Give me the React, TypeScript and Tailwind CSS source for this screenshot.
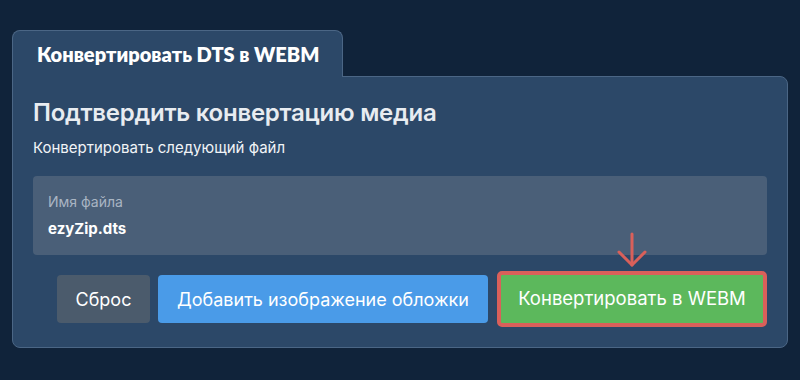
export default function App() {
    return (
        <div className="min-h-[380px] w-[800px] bg-[#10233a] px-3 pt-[30px] font-['Inter',sans-serif]">
            {/* Tab */}
            <div className="relative z-10 -mb-px flex h-[47px] w-[331px] items-center rounded-t-[8px] border border-b-0 border-[#4b6685] bg-[#2c4868] pl-6">
                <span className="font-['Lato',sans-serif] text-[20px] font-extrabold text-white">
                    Конвертировать DTS в WEBM
                </span>
            </div>

            {/* Card */}
            <div className="w-[776px] rounded-b-[8px] rounded-tr-[8px] border border-[#4b6685] bg-[#2c4868] px-5 pb-5 pt-[20px]">
                <h1 className="text-[24px] leading-8 font-semibold tracking-[-0.25px] text-[#e8ecf1]">Подтвердить конвертацию медиа</h1>
                <p className="mt-[9px] text-[15px] leading-5 text-[#f1f4f7]">Конвертировать следующий файл</p>

                <div className="mt-[18px] rounded-[4px] bg-[#4a5f78] px-[15px] pt-[17px] pb-[15px]">
                    <div className="text-[14px] leading-[18px] text-[#a9b5c3]">Имя файла</div>
                    <div className="mt-[7px] text-[15px] leading-[22px] font-bold text-white">ezyZip.dts</div>
                </div>

                <div className="mt-4 flex items-center justify-end">
                    <button className="h-12 w-[93px] rounded-[4px] bg-[#4b5b6c] text-[18px] text-white">Сброс</button>
                    <button className="ml-2 h-12 w-[330px] rounded-[4px] bg-[#4a9be8] text-[18px] text-white">
                        Добавить изображение обложки
                    </button>
                    <div className="relative ml-[9px]">
                        <svg
                            className="absolute bottom-[calc(100%+3px)] left-1/2 -translate-x-1/2"
                            width="30"
                            height="36"
                            viewBox="0 0 30 36"
                            fill="none"
                            stroke="#d9605a"
                            strokeWidth="3"
                            strokeLinecap="round"
                            strokeLinejoin="round"
                        >
                            <path d="M15 2 V33" />
                            <path d="M2 20 L15 33 L28 20" />
                        </svg>
                        <button className="h-14 w-[270px] rounded-[5px] border-4 border-[#d9605a] bg-[#5cb85c] text-[18.5px] text-white">
                            Конвертировать в WEBM
                        </button>
                    </div>
                </div>
            </div>
        </div>
    );
}
